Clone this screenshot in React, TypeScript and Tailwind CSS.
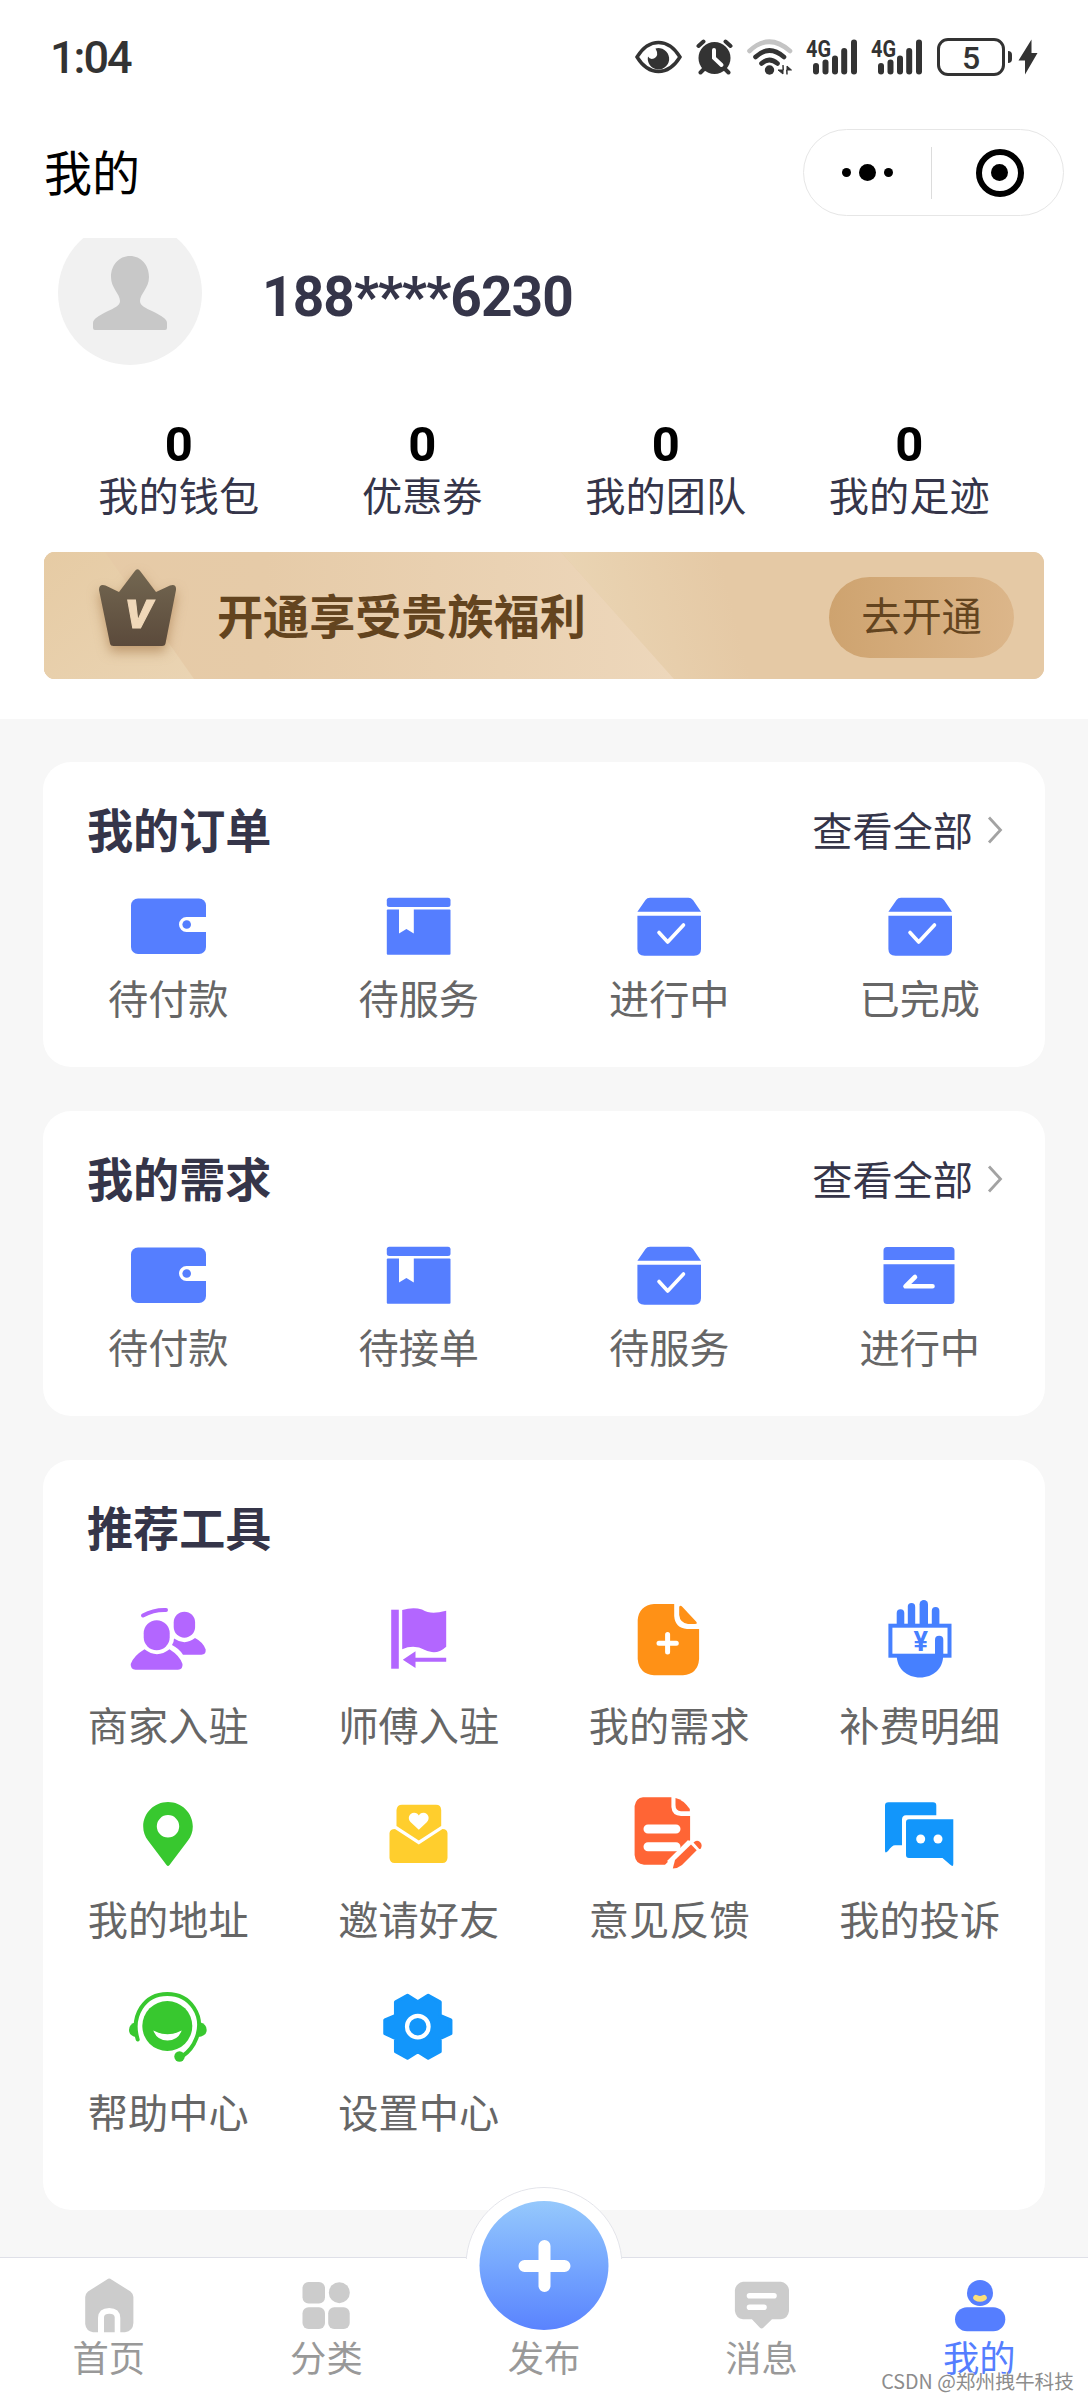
import type { ReactNode } from "react"
import clsx from "clsx"

type Item = { label: string; icon: ReactNode }

const BLUE = "#557eff"

/* ---------- status bar ---------- */

function SignalIcon() {
  return (
    <svg className="overflow-visible" width="52" height="36" viewBox="0 0 52 36" fill="#333">
      <text x="0" y="17.500" fontSize="23" fontWeight="700" fontFamily="Roboto, sans-serif" textLength="25" lengthAdjust="spacingAndGlyphs">
        4G
      </text>
      <rect x="7" y="24" width="6" height="11.500" rx="3" />
      <rect x="16.500" y="20.500" width="6" height="15" rx="3" />
      <rect x="26" y="16.500" width="6" height="19" rx="3" />
      <rect x="35.200" y="9" width="6" height="26.500" rx="3" />
      <rect x="45" y="0.500" width="6" height="35" rx="3" />
    </svg>
  )
}

function StatusBar() {
  return (
    <div className="flex h-[114px] items-center justify-between pr-[50px] pl-[50px]">
      <span className="font-[Roboto] text-[45px] leading-none font-medium tracking-[-2px] text-[#333]">1:04</span>
      <div className="flex items-center">
        <svg width="47" height="34" viewBox="0 0 47 34">
          <path d="M2 17Q11 2.500 23.500 2.500T45 17Q36 31.500 23.500 31.500T2 17Z" fill="none" stroke="#333" strokeWidth="3.400" />
          <path d="M20.500 8.500A10.700 10.700 0 1 1 13 16.500Q15 20 19 18.500Q24.500 15.500 20.500 8.500Z" fill="#333" />
        </svg>
        <svg className="ml-[14px]" width="38" height="36" viewBox="0 0 38 36">
          <circle cx="18.500" cy="19" r="16" fill="#333" />
          <g stroke="#333" strokeWidth="4" strokeLinecap="round">
            <path d="M2.500 7L7.500 2.500M34.500 7L29.500 2.500M8 30L4.500 33.500M29 30L32.500 33.500" />
          </g>
          <path d="M18 11V19L25.500 26" fill="none" stroke="#fff" strokeWidth="4" strokeLinecap="round" />
        </svg>
        <svg className="ml-[13px]" width="46" height="36" viewBox="0 0 46 36" fill="none" strokeLinecap="round" strokeWidth="4.600">
          <path d="M2.500 12Q22 -6.500 43 12" stroke="#c4c4c4" />
          <path d="M8.500 18Q22 5 37 18" stroke="#333" />
          <path d="M14.500 24.500Q22 17.500 30.500 24.500" stroke="#333" />
          <circle cx="22.500" cy="31" r="4.700" fill="#333" />
          <path d="M36 26.500V35L31 31H36ZM40 35V27L44.500 31H40Z" fill="#333" stroke="#333" strokeWidth="1" />
        </svg>
        <div className="ml-[13px] flex gap-[13px]">
          <SignalIcon />
          <SignalIcon />
        </div>
        <div className="ml-[14px] flex h-[38px] w-[68px] items-center justify-center rounded-[11px] border-[3px] border-[#333] pt-px font-[Roboto] text-[32px] leading-none font-medium text-[#333]">
          5
        </div>
        <div className="ml-[3px] h-3 w-1 rounded-r bg-[#333]" />
        <svg className="ml-[6px]" width="20" height="36" viewBox="0 0 20 36">
          <path d="M13.500 0.500L0.500 21.500H7V35.500L19.500 14H13.500Z" fill="#333" />
        </svg>
      </div>
    </div>
  )
}

function TitleBar() {
  return (
    <div className="flex h-[124px] items-center justify-between pr-6 pb-[7px] pl-11">
      <h1 className="relative -top-[3px] text-[48px] leading-none text-black">我的</h1>
      <div className="flex h-[87px] w-[261px] items-center rounded-full border border-[#e6e6e6]">
        <div className="flex flex-1 items-center justify-center gap-2">
          <i className="size-[9px] rounded-full bg-black" />
          <i className="size-[17px] rounded-full bg-black" />
          <i className="size-[9px] rounded-full bg-black" />
        </div>
        <div className="h-[52px] w-px bg-[#dcdcdc]" />
        <div className="flex flex-1 items-center justify-center pl-1">
          <div className="flex size-12 items-center justify-center rounded-full border-[6px] border-black">
            <i className="size-[17px] rounded-full bg-black" />
          </div>
        </div>
      </div>
    </div>
  )
}

/* ---------- profile ---------- */

const stats = ["我的钱包", "优惠劵", "我的团队", "我的足迹"]

function Profile() {
  return (
    <div>
      <div className="flex h-[170px] items-start overflow-hidden pl-[58px]">
        <svg className="-mt-[17px] shrink-0" width="144" height="144" viewBox="0 0 144 144">
          <circle cx="72" cy="72" r="72" fill="#f1f1f1" />
          <path
            d="M72 35C83 35 91 44 91 56C91 67 82 73 82 80C82 85 88 87 94 90C104 95 109 98 109 102V107Q109 109 107 109H37Q35 109 35 107V102C35 98 40 95 50 90C56 87 62 85 62 80C62 73 53 67 53 56C53 44 61 35 72 35Z"
            fill="#c8c8c8"
          />
        </svg>
        <span className="mt-[31px] ml-[60px] font-[Roboto] text-[55px] leading-[56px] font-bold tracking-[-0.900px] text-[#353549]">
          188****6230
        </span>
      </div>
      <div className="grid grid-cols-4 px-[57px]">
        {stats.map((label) => (
          <div key={label} className="flex flex-col items-center pt-[11px]">
            <span className="font-[Roboto] text-[49px] leading-[52px] font-bold text-black">0</span>
            <span className="mt-px text-[40.200px] leading-[44px] text-[#353549]">{label}</span>
          </div>
        ))}
      </div>
    </div>
  )
}

function VipBanner() {
  return (
    <div className="relative mx-[44px] mt-[36px] flex h-[127px] items-center overflow-hidden rounded-[11px] bg-[#e6caa5]">
      <svg className="absolute inset-0" width="1000" height="127" viewBox="0 0 1000 127">
        <defs>
          <linearGradient id="left" x1="0" y1="0" x2="1" y2="1">
            <stop offset="0" stopColor="#e6cba4" />
            <stop offset="1" stopColor="#ead4b3" />
          </linearGradient>
          <linearGradient id="mid" x1="0" y1="0" x2="1" y2="0">
            <stop offset="0" stopColor="#e6caa6" />
            <stop offset="0.350" stopColor="#e6cba8" />
            <stop offset="1" stopColor="#edd7bb" />
          </linearGradient>
          <linearGradient id="right" gradientUnits="userSpaceOnUse" x1="520" y1="60" x2="680" y2="20">
            <stop offset="0" stopColor="#ead5b4" />
            <stop offset="1" stopColor="#e5c9a5" />
          </linearGradient>
        </defs>
        <path d="M517 0H1000V127H630Z" fill="url(#right)" />
        <path d="M0 0H517L630 127H0Z" fill="url(#mid)" />
        <path d="M0 0H61L150 127H0Z" fill="url(#left)" />
      </svg>
      <svg className="relative top-px ml-[46px] drop-shadow-[0_6px_6px_rgba(150,100,50,0.500)]" width="96" height="100" viewBox="0 0 96 100">
        <defs>
          <linearGradient id="crown" x1="0" y1="0" x2="0" y2="1">
            <stop offset="0" stopColor="#736751" />
            <stop offset="1" stopColor="#5b4a3b" />
          </linearGradient>
        </defs>
        <path
          d="M44.500 4.500Q47.500 0 50.500 4.500L66 25L80 18.500Q86.500 16.500 86 23L75.500 76.500Q75 79 72 79H23.500Q20.500 79 20 76.500L9 23Q9 16.500 15.500 18.500L29 25Z"
          fill="url(#crown)"
        />
        <text
          x="35"
          y="61"
          fontSize="38"
          fontWeight="900"
          fontStyle="italic"
          fontFamily="Roboto, sans-serif"
          textLength="27"
          lengthAdjust="spacingAndGlyphs"
          fill="#f0d8b9"
          stroke="#f0d8b9"
        >
          V
        </text>
      </svg>
      <span className="relative -top-[1px] ml-[31px] text-[46.100px] leading-none font-bold text-[#63441f]">开通享受贵族福利</span>
      <button className="relative top-[2px] mr-[30px] ml-auto flex h-[81px] w-[185px] items-center justify-center rounded-full bg-linear-to-r from-[#cea36f] to-[#dcb68a] pb-[6px] text-[40.200px] leading-none text-[#63441f]">
        去开通
      </button>
    </div>
  )
}

/* ---------- order icons, 80x60 ---------- */

const walletIcon = (
  <svg width="80" height="60" viewBox="0 0 80 60">
    <rect x="3" y="1.500" width="75" height="55.500" rx="7" fill={BLUE} />
    <path d="M79 20H58.500A7.500 7.500 0 0 0 58.500 35H79Z" fill="#fff" />
    <circle cx="58.700" cy="27.500" r="4.300" fill={BLUE} />
  </svg>
)

const bookmarkBoxIcon = (
  <svg width="80" height="60" viewBox="0 0 80 60">
    <rect x="7.800" y="0.700" width="63.700" height="9.300" rx="2.500" fill={BLUE} />
    <rect x="7.800" y="12.500" width="63.700" height="45.200" rx="1" fill={BLUE} />
    <path d="M20 12V36.500L27.400 32L34.800 36.500V12Z" fill="#fff" />
  </svg>
)

const checkBoxIcon = (
  <svg width="80" height="60" viewBox="0 0 80 60">
    <path d="M8.400 14.700L16.500 3Q18 0.700 21 0.700H59.500Q62 0.700 64 3L72 14.700Z" fill={BLUE} />
    <path d="M8.400 18.700H72V52Q72 58.700 65 58.700H15.500Q8.400 58.700 8.400 52Z" fill={BLUE} />
    <path d="M30 35.500L38.700 45L54.500 28" fill="none" stroke="#fff" strokeWidth="3.600" strokeLinecap="round" strokeLinejoin="round" />
  </svg>
)

const returnBoxIcon = (
  <svg width="80" height="60" viewBox="0 0 80 60">
    <path d="M3.500 14V4.500Q3.500 1 7 1H71Q74.500 1 74.500 4.500V14ZM3.500 18.300H74.500V54.500Q74.500 58 71 58H7Q3.500 58 3.500 54.500Z" fill={BLUE} />
    <path d="M35 31L25.500 40.300H52.500" fill="none" stroke="#fff" strokeWidth="4.600" strokeLinecap="round" strokeLinejoin="round" />
  </svg>
)

const orders: Item[] = [
  { label: "待付款", icon: walletIcon },
  { label: "待服务", icon: bookmarkBoxIcon },
  { label: "进行中", icon: checkBoxIcon },
  { label: "已完成", icon: checkBoxIcon },
]

const demands: Item[] = [
  { label: "待付款", icon: walletIcon },
  { label: "待接单", icon: bookmarkBoxIcon },
  { label: "待服务", icon: checkBoxIcon },
  { label: "进行中", icon: returnBoxIcon },
]

/* ---------- tool icons, 80x80 ---------- */

const tools: Item[] = [
  {
    label: "商家入驻",
    icon: (
      <svg width="80" height="80" viewBox="0 0 80 80" fill="#b366ff">
        <path d="M15 16.500Q26 10.500 38 11" fill="none" stroke="#b366ff" strokeWidth="4" strokeLinecap="round" />
        <rect x="15.700" y="21.300" width="26" height="30" rx="13" />
        <rect x="45.700" y="12.700" width="21.400" height="26" rx="10.700" />
        <path d="M16.500 50.300Q29 60 41.500 50.300Q52 57 54.500 65Q55 70.700 50 70.700H7.500Q2.500 70.700 2.700 65Q5.500 57 16.500 50.300Z" />
        <path d="M46 39.500Q57 47 67 39Q75 43 77.700 50.500Q78 55.700 73.500 55.700H55Q51 49.500 44 46Q46 43 46 39.500Z" />
      </svg>
    ),
  },
  {
    label: "师傅入驻",
    icon: (
      <svg width="80" height="80" viewBox="0 0 80 80" fill="#b366ff">
        <rect x="12.200" y="10.700" width="7.600" height="59" />
        <path d="M23.200 11Q34 8 43 10.500C50 14.500 56 14.500 67.200 11.700V47.700C60 54 54 54.500 46 51Q35 45 23.200 50.300Z" />
        <path d="M23.800 60.700L36.500 52.300V58.700H67.200V62.700H36.500V69Z" />
      </svg>
    ),
  },
  {
    label: "我的需求",
    icon: (
      <svg width="80" height="80" viewBox="0 0 80 80" fill="#ff9116">
        <path d="M25 5H45.200V17Q46 29 58 30H70.100V60Q69 75 54 76.300H25Q10 75 8.700 60V21Q10 6.500 25 5Z" />
        <path d="M50.200 8Q51 5.500 53.500 8L67 22.500Q69 25 66 25H59Q51 24 50.200 16Z" />
        <path d="M38.600 35.500V53M30 44.300H47.300" stroke="#fff" strokeWidth="5" strokeLinecap="round" />
      </svg>
    ),
  },
  {
    label: "补费明细",
    icon: (
      <svg width="80" height="80" viewBox="0 0 80 80" fill="#4680ff">
        <rect x="16.700" y="10.300" width="7.600" height="22" rx="3.800" />
        <rect x="27.800" y="4" width="7.400" height="28" rx="3.700" />
        <rect x="39.600" y="1" width="8.400" height="30" rx="4.200" />
        <rect x="51.800" y="8" width="7.600" height="24" rx="3.800" />
        <path d="M16.700 56H63.200C63.200 70 53 78.500 40 78.500S16.700 70 16.700 56Z" />
        <rect x="10.400" y="26.700" width="59.100" height="30" fill="#fff" stroke="#4680ff" strokeWidth="4" />
        <rect x="55" y="36.700" width="8.300" height="24" rx="4.100" />
        <text x="40.700" y="51.500" fontSize="27" fontWeight="700" fontFamily="Roboto, sans-serif" textAnchor="middle">
          ¥
        </text>
      </svg>
    ),
  },
  {
    label: "我的地址",
    icon: (
      <svg width="80" height="80" viewBox="0 0 80 80">
        <path
          fillRule="evenodd"
          fill="#38c82f"
          d="M40 9C53.700 9 64.800 20 64.800 33.500C64.800 39 63 43.500 60 47.500L41.500 72Q40 74 38.500 72L20 47.500C17 43.500 15.200 39 15.200 33.500C15.200 20 26.300 9 40 9ZM40 22.100A11.200 11.200 0 1 0 40 44.500A11.200 11.200 0 1 0 40 22.100Z"
        />
      </svg>
    ),
  },
  {
    label: "邀请好友",
    icon: (
      <svg width="80" height="80" viewBox="0 0 80 80" fill="#ffce2d">
        <path d="M17.500 33V17Q18 11.700 23 11.700H57Q62 11.700 62.200 17V33L39.800 47.500Z" />
        <path d="M10.500 40Q11 36 16 36L39.800 51.500L63.500 36Q68 36 68.500 40V65Q68 70 63.500 70H15.500Q11 70 10.500 65Z" />
        <path d="M39.800 36.700L31.500 29C28 25 30.500 19.700 35 19.700C37.500 19.700 39 21 39.800 22.500C40.600 21 42 19.700 44.600 19.700C49 19.700 51.500 25 48 29Z" fill="#fff" />
      </svg>
    ),
  },
  {
    label: "意见反馈",
    icon: (
      <svg width="80" height="80" viewBox="0 0 80 80" fill="#ff6535">
        <path d="M14 4.300H42.400V14Q43 22.500 52 23H61.100V47L36 71.700H15Q6.500 71 5.600 62V13Q7 5 14 4.300Z" />
        <path d="M46.500 5Q54 6.500 60.800 16V18.300H52Q46.500 18 46.500 12Z" />
        <path d="M19 36H47M19 53.700H47" stroke="#fff" strokeWidth="9" strokeLinecap="round" />
        <path d="M43 73L64 52" stroke="#fff" strokeWidth="14" />
        <path d="M43.800 75.500L46 67L62 51.500L67.700 57.300L53 72Q49 75.300 43.800 75.500Z" />
        <path d="M64.500 49.500Q67.500 46.500 71 49Q74 52 71.500 56L70.300 56Z" />
      </svg>
    ),
  },
  {
    label: "我的投诉",
    icon: (
      <svg width="80" height="80" viewBox="0 0 80 80" fill="#1296fb">
        <path d="M8.500 9.300H53Q56.300 9.300 56.300 12.500V22.300H26Q22 22.500 22 26.500V52.300H15Q12 52.300 8 58Q5 61 5 57.500V12.500Q5 9.300 8.500 9.300Z" />
        <path d="M29 26.300H73.300V71Q73.300 74.500 70 71.500L62.500 65H29Q26 65 26 62V29.500Q26 26.300 29 26.300Z" />
        <circle cx="40.700" cy="46" r="4.500" fill="#fff" />
        <circle cx="58" cy="46" r="4.500" fill="#fff" />
      </svg>
    ),
  },
  {
    label: "帮助中心",
    icon: (
      <svg width="80" height="80" viewBox="0 0 80 80" fill="#38c82f">
        <path d="M9.700 53.500C2.500 30 16 8 39.300 8S77 30 68.500 52Q64 64 54 70.500" fill="none" stroke="#38c82f" strokeWidth="4" strokeLinecap="round" />
        <circle cx="39.300" cy="40" r="25" />
        <path d="M8 36Q1 38 1 44T8.500 51Z" />
        <path d="M71.500 36Q78.700 38 78.700 44T70 51Z" />
        <circle cx="51.500" cy="70.500" r="5.200" />
        <path d="M25.300 44.500Q39.500 52 53.700 44.500Q50 54.500 39.500 54.500T25.300 44.500Z" fill="#fff" />
      </svg>
    ),
  },
  {
    label: "设置中心",
    icon: (
      <svg width="80" height="80" viewBox="0 0 80 80">
        <path
          d="M28.500 9.500L38.800 16L49.200 9.500L61 16V29.500L71.700 34V47.500L61 52.500V65.500L49.200 72L38.800 65.500L28.500 72L16.700 65.500V52.500L6 47.500V34L16.700 29.500V16Z"
          fill="#1296fb"
          stroke="#1296fb"
          strokeWidth="3.500"
          strokeLinejoin="round"
        />
        <circle cx="38.800" cy="40.700" r="10.800" fill="none" stroke="#fff" strokeWidth="4.200" />
      </svg>
    ),
  },
]

function Card({ title, more, className, children }: { title: string; more?: boolean; className?: string; children: ReactNode }) {
  return (
    <section className={clsx("rounded-[28px] bg-white", className)}>
      <div className="flex h-[135px] items-center justify-between pr-[42px] pl-[44px]">
        <h2 className="relative -top-[1px] text-[46.100px] leading-none font-bold text-[#353549]">{title}</h2>
        {more && (
          <div className="flex items-center text-[40.200px] leading-none text-[#353549]">
            <span>查看全部</span>
            <svg className="relative top-px ml-[14px]" width="16" height="28" viewBox="0 0 16 28">
              <path d="M2 1.500L13.500 14L2 26.500" fill="none" stroke="#a3a3a3" strokeWidth="2.800" />
            </svg>
          </div>
        )}
      </div>
      {children}
    </section>
  )
}

function IconGrid({ items, gap }: { items: Item[]; gap: string }) {
  return (
    <div className="grid grid-cols-4">
      {items.map(({ label, icon }) => (
        <div key={label} className="flex flex-col items-center">
          {icon}
          <span className={clsx("text-[40.200px] leading-[44px] text-[#666]", gap)}>{label}</span>
        </div>
      ))}
    </div>
  )
}

/* ---------- bottom tabs ---------- */

const tabs = [
  {
    label: "首页",
    icon: (
      <svg width="56" height="56" viewBox="0 0 56 56" fill="#ccc">
        <path d="M26 2.500Q28.200 0.500 30.400 2.500L49.500 14.500Q52.400 17 52.400 20V46Q52 54 44 55.300H39.300V41Q39 31 28.200 31T17 41V55.300H12Q5 54 4.200 47V20Q4.200 17 7 14.500Z" />
        <path d="M23 55.300V40Q23.500 36.700 28.300 36.700T33.700 40V55.300Z" />
      </svg>
    ),
  },
  {
    label: "分类",
    icon: (
      <svg width="56" height="56" viewBox="0 0 56 56" fill="#ccc">
        <rect x="4.500" y="5" width="22.500" height="21.500" rx="6" />
        <circle cx="41.300" cy="15.700" r="10.500" />
        <rect x="4.500" y="30.300" width="22.500" height="21.700" rx="6" />
        <rect x="30.200" y="30.300" width="21.500" height="21.700" rx="6" />
      </svg>
    ),
  },
  { label: "发布", icon: <div className="h-[56px]" /> },
  {
    label: "消息",
    icon: (
      <svg width="56" height="56" viewBox="0 0 56 56" fill="#ccc">
        <path d="M9 4.700H47Q54 6 55 13V34Q54 41.500 47 42.300H38L29.500 50.500Q27.600 52.500 25.700 50.500L17.900 42.300H9Q2 41.500 0.900 34V13Q2 6 9 4.700Z" />
        <path d="M15.500 18.700H40M15.500 30.300H30" stroke="#fff" strokeWidth="5.600" strokeLinecap="round" />
      </svg>
    ),
  },
  {
    label: "我的",
    active: true,
    icon: (
      <svg width="56" height="56" viewBox="0 0 56 56" fill={BLUE}>
        <circle cx="29" cy="16" r="13" />
        <rect x="4" y="30.300" width="50.300" height="24" rx="12" />
        <path d="M25 20.700Q29 23 33 20.700" fill="none" stroke="#fbdf7a" strokeWidth="5.600" strokeLinecap="round" />
      </svg>
    ),
  },
]

function TabBar() {
  return (
    <nav className="relative h-[143px] shrink-0 border-t border-[#dfe0e8] bg-white">
      {/* raised rim behind the publish button */}
      <div className="absolute -top-[71px] left-1/2 h-[72px] w-[157px] -translate-x-1/2 overflow-hidden">
        <div className="size-[157px] rounded-full border border-[#e3e4ea] bg-white" />
      </div>
      <div className="absolute -top-[57px] left-1/2 flex size-[129px] -translate-x-1/2 items-center justify-center rounded-full bg-linear-to-b from-[#95c8fc] to-[#5a83fe]">
        <svg width="54" height="54" viewBox="0 0 54 54" stroke="#fff" strokeWidth="12" strokeLinecap="round">
          <path d="M27 7V47M7 27H47" />
        </svg>
      </div>
      <div className="grid grid-cols-5 pt-[19px]">
        {tabs.map(({ label, icon, active }) => (
          <div key={label} className="flex flex-col items-center">
            {icon}
            <span className={clsx("mt-[3px] text-[36.300px] leading-[40px]", active ? "text-[#557eff]" : "text-[#999]")}>{label}</span>
          </div>
        ))}
      </div>
      <span className="absolute right-[14px] bottom-[6px] text-[19.700px] leading-[26px] whitespace-nowrap text-[#8c8c8c] [text-shadow:-1px_-1px_0_#fff]">
        CSDN @郑州拽牛科技
      </span>
    </nav>
  )
}

export default function App() {
  return (
    <div className="flex h-[2400px] w-[1088px] flex-col overflow-hidden bg-[#f7f7f7] font-['Noto_Sans_CJK_SC',sans-serif]">
      <header className="h-[719px] shrink-0 bg-white">
        <StatusBar />
        <TitleBar />
        <Profile />
        <VipBanner />
      </header>
      <main className="flex-1 px-[43px] pt-[43px]">
        <Card title="我的订单" more className="h-[305px]">
          <IconGrid items={orders} gap="mt-[18px]" />
        </Card>
        <Card title="我的需求" more className="mt-[44px] h-[305px]">
          <IconGrid items={demands} gap="mt-[18px]" />
        </Card>
        <Card title="推荐工具" className="mt-[44px] h-[750px]">
          <div className="pt-1">
            <IconGrid items={tools} gap="mt-[23px] mb-[46.500px]" />
          </div>
        </Card>
      </main>
      <TabBar />
    </div>
  )
}
